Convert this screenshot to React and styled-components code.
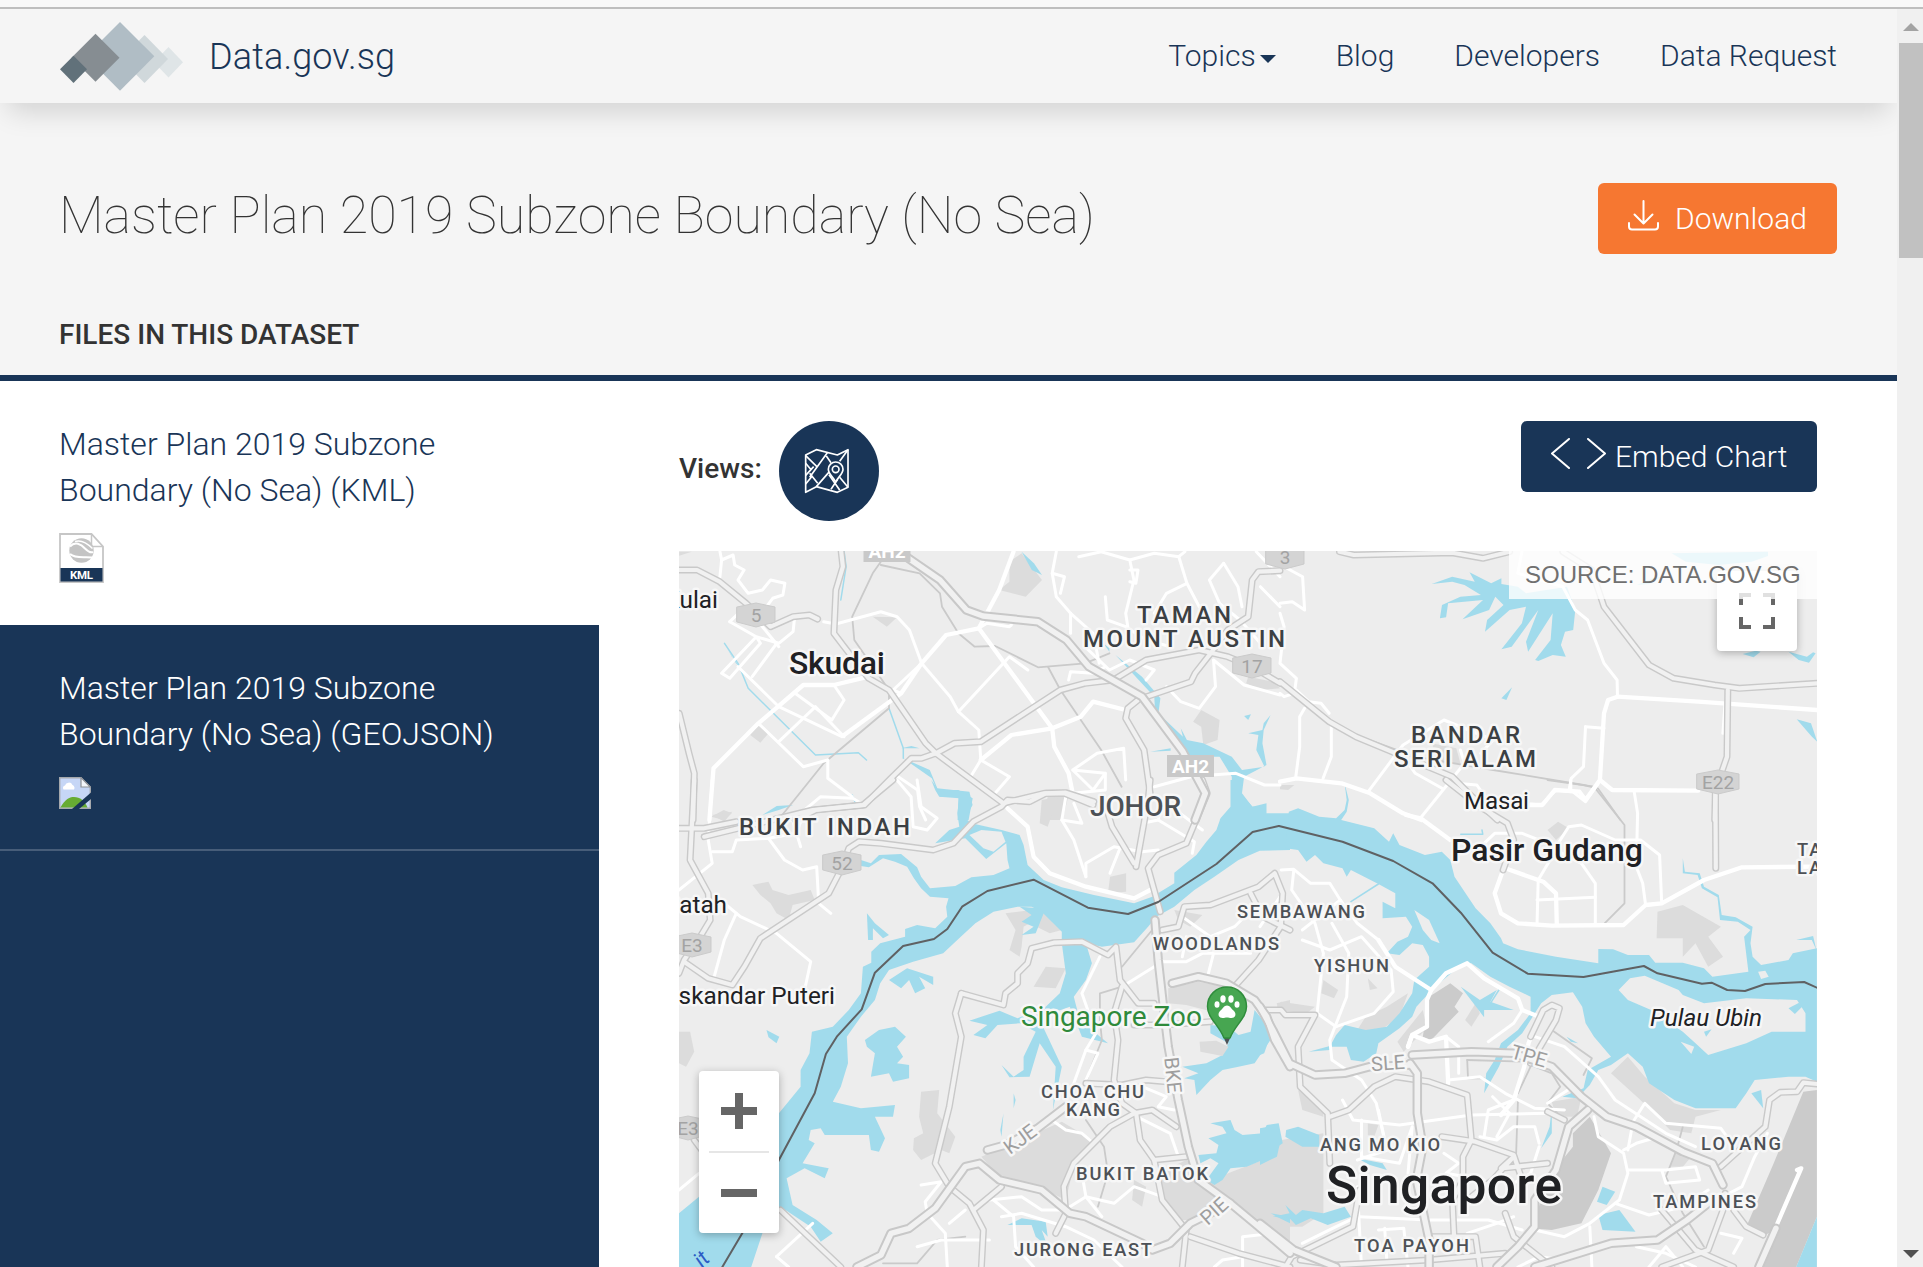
import React from 'react';
import styled, { createGlobalStyle } from 'styled-components';

const navy = '#193557';

const GlobalStyle = createGlobalStyle`
  * { box-sizing: border-box; }
  body {
    margin: 0;
    background: #fff;
    font-family: Roboto, 'Liberation Sans', sans-serif;
    overflow: hidden;
  }
`;

/* ---------- page frame ---------- */

const Window = styled.div`
  display: flex;
  flex-direction: column;
  width: 1923px;
  height: 1267px;
  overflow: hidden;
`;

const ToolbarEdge = styled.div`
  flex: none;
  height: 9px;
  background: #f8f8f8;
  border-bottom: 2px solid #bebebe;
`;

const Viewport = styled.div`
  display: flex;
  flex: 1;
  min-height: 0;
`;

const Page = styled.div`
  display: flex;
  flex-direction: column;
  width: 1897px;
  overflow: hidden;
`;

const ScrollTrack = styled.div`
  display: flex;
  flex-direction: column;
  align-items: center;
  width: 26px;
  padding: 14px 0 9px 2px;
  background: #f0f0f0;
`;

const ScrollArrow = styled.svg`
  flex: none;
  display: block;
  width: 16px;
  height: 8px;
`;

const ScrollThumb = styled.div`
  flex: none;
  width: 24px;
  height: 215px;
  margin: 12px 0 auto;
  background: #c1c1c1;
`;

/* ---------- header ---------- */

const Header = styled.header`
  position: relative;
  z-index: 1;
  flex: none;
  display: flex;
  align-items: center;
  height: 94px;
  padding: 0 60px;
  background: #f5f5f5;
  box-shadow: 0 16px 28px -8px rgba(0, 0, 0, 0.15);
`;

const LogoMark = styled.svg`
  flex: none;
  width: 123px;
  height: 69px;
`;

const Brand = styled.a`
  margin: 2px 0 0 26px;
  font-size: 36px;
  font-weight: 300;
  line-height: 42px;
  letter-spacing: 0.15px;
  color: ${navy};
`;

const Nav = styled.nav`
  display: flex;
  gap: 60px;
  margin-left: auto;
`;

const NavLink = styled.a`
  display: flex;
  align-items: center;
  font-size: 30px;
  font-weight: 300;
  line-height: 36px;
  color: ${navy};
`;

const Caret = styled.span`
  width: 0;
  height: 0;
  margin: 5px 0 0 4px;
  border: 8px solid transparent;
  border-top-color: ${navy};
  border-bottom: 0;
`;

/* ---------- title area ---------- */

const Hero = styled.section`
  flex: none;
  display: flex;
  flex-direction: column;
  height: 278px;
  padding: 80px 60px 0 59px;
  background: #f5f5f5;
  border-bottom: 6px solid ${navy};
`;

const HeroRow = styled.div`
  display: flex;
  justify-content: space-between;
  align-items: flex-start;
`;

const Title = styled.h1`
  margin: 1px 0 0;
  font-size: 52px;
  font-weight: 100;
  line-height: 64px;
  color: #333;
`;

const Button = styled.button`
  display: flex;
  align-items: center;
  height: 71px;
  width: ${(p) => p.$width}px;
  padding: 0 0 0 30px;
  border: 0;
  border-radius: 6px;
  background: ${(p) => p.$fill};
  color: #fff;
  font-family: inherit;
  font-size: 30px;
  font-weight: 300;
  line-height: 36px;
  white-space: nowrap;
`;

const ButtonIcon = styled.svg`
  flex: none;
  width: ${(p) => p.$w}px;
  height: ${(p) => p.$h}px;
  margin: 0 ${(p) => p.$gap}px 7px 0;
  fill: none;
  stroke: #fff;
  stroke-width: 2;
  stroke-linecap: round;
  stroke-linejoin: round;
`;

const SectionLabel = styled.h2`
  margin: 65px 0 0;
  font-size: 28px;
  font-weight: 500;
  line-height: 32px;
  color: #333;
`;

/* ---------- body ---------- */

const Body = styled.main`
  flex: 1;
  display: flex;
  min-height: 0;
`;

const FileList = styled.aside`
  width: 599px;
  display: flex;
  flex-direction: column;
  background: ${navy};
`;

const FileItem = styled.a`
  display: flex;
  flex-direction: column;
  align-items: flex-start;
  height: ${(p) => (p.$active ? 226 : 244)}px;
  padding: 40px 60px 0 59px;
  background: ${(p) => (p.$active ? navy : '#fff')};
  color: ${(p) => (p.$active ? '#fff' : navy)};
  border-bottom: ${(p) => (p.$active ? '2px solid #475d79' : '0')};
`;

const FileName = styled.span`
  font-size: 32px;
  font-weight: 300;
  line-height: 46px;
  white-space: pre-line;
`;

const FileBadge = styled.svg`
  margin-top: 20px;
  flex: none;
  display: block;
  width: ${(p) => p.$w}px;
  height: ${(p) => p.$h}px;
`;

const Viewer = styled.section`
  display: flex;
  flex-direction: column;
  padding: 40px 80px 0;
`;

const ViewerBar = styled.div`
  display: flex;
  align-items: flex-start;
  height: 130px;
`;

const ViewsLabel = styled.span`
  width: 100px;
  margin-top: 32px;
  font-size: 28px;
  font-weight: 500;
  line-height: 32px;
  color: #333;
`;

const ViewToggle = styled.button`
  display: flex;
  align-items: center;
  justify-content: center;
  width: 100px;
  height: 100px;
  margin-right: auto;
  padding: 0 4px 0 0;
  border: 0;
  border-radius: 50%;
  background: ${navy};

  svg {
    width: 46px;
    height: 46px;
    fill: none;
    stroke: #fff;
    stroke-width: 5;
    stroke-linejoin: round;
  }
`;

/* ---------- map ---------- */

const MapFrame = styled.div`
  position: relative;
  width: 1138px;
  height: 716px;
  overflow: hidden;
  background: #ededed;
`;

const MapCanvas = styled.svg`
  display: block;
  width: 1138px;
  height: 716px;
  fill: none;
  stroke-linejoin: round;
  stroke-linecap: round;
`;

const MapLabel = styled.text`
  font-family: Roboto, 'Liberation Sans', sans-serif;
  font-size: ${(p) => p.$size}px;
  font-weight: ${(p) => p.$weight || 400};
  font-style: ${(p) => (p.$italic ? 'italic' : 'normal')};
  letter-spacing: ${(p) => p.$track || 0}px;
  fill: ${(p) => p.$ink || '#202124'};
  stroke: ${(p) => p.$halo || '#f7f7f7'};
  stroke-width: 5px;
  paint-order: stroke;
  text-anchor: ${(p) => p.$anchor || 'start'};
`;

const ShieldText = styled.text`
  font-family: Roboto, 'Liberation Sans', sans-serif;
  font-size: 19px;
  font-weight: ${(p) => (p.$strong ? 700 : 400)};
  fill: ${(p) => (p.$strong ? '#fff' : '#a3a3a3')};
  text-anchor: middle;
`;

const SourceTag = styled.div`
  position: absolute;
  top: 0;
  right: 0;
  width: 308px;
  height: 48px;
  padding: 0 16px;
  background: rgba(255, 255, 255, 0.8);
  font-family: 'Liberation Sans', Arial, sans-serif;
  font-size: 24px;
  line-height: 47px;
  color: #707070;
  white-space: nowrap;
`;

const MapControl = styled.div`
  position: absolute;
  left: ${(p) => p.$x}px;
  top: ${(p) => p.$y}px;
  display: flex;
  flex-direction: column;
  align-items: center;
  width: 80px;
  border-radius: 4px;
  background: #fff;
  box-shadow: 0 2px 8px rgba(0, 0, 0, 0.28);
`;

const ControlIcon = styled.svg`
  display: block;
  width: 80px;
  height: 80px;
  fill: #666;
`;

const ControlRule = styled.div`
  width: 60px;
  height: 2px;
  background: #e6e6e6;
`;

/* ---------- map geometry ---------- */

const sheets = {
  nw: { x: -39, y: -171, w: 2.45 },
  ne: { x: 601, y: -171, w: 2.4386 },
  sw: { x: -19, y: 229, w: 2.489 },
  se: { x: 581, y: 229, w: 2.365 },
};

const project = (sheet, points) => {
  const s = sheets[sheet];
  return points
    .trim()
    .split(/\s+/)
    .map((pair) => {
      const [x, y] = pair.split(',').map(Number);
      return `${(s.x + x / s.w).toFixed(1)},${(s.y + y / 3).toFixed(1)}`;
    })
    .join(' ');
};

const parks = [
  ['nw', '905,545 935,520 985,600 945,650 880,630 905,605'],
  ['nw', '570,710 630,712 605,740'],
  ['nw', '270,1065 290,1035 315,1060 295,1088'],
  ['nw', '1375,990 1420,1020 1415,1080 1380,1095 1375,1040 1355,1025'],
  ['nw', '1490,890 1550,905 1568,925 1520,930 1485,910'],
  ['nw', '985,1320 1000,1245 1050,1245 1035,1320'],
  ['nw', '96,515 127,515 96,527'],
  ['nw', '175,1310 205,1290 225,1300 205,1320'],
  ['ne', '370,1090 430,1105 440,1150 390,1150'],
  ['ne', '0,1215 35,1215 20,1230 0,1228'],
  ['sw', '230,315 270,305 280,330 320,345 375,330 385,360 330,375 320,420 290,400 275,370 250,345'],
  ['sw', '130,105 180,95 160,125'],
  ['sw', '47,755 75,755 85,815 65,860 47,850'],
  ['sw', '650,935 695,930 690,1000 735,1070 720,1120 700,1110 650,1140 630,1110 632,1075 655,1060 645,1010'],
  ['sw', '800,1130 1000,1025 1085,1085 1060,1110 1030,1160 1010,1260 950,1225 850,1200'],
  ['sw', '860,400 960,385 1000,450 970,460 920,430 905,440 900,500 895,530 870,510 885,450'],
  ['sw', '960,560 1010,565 985,625 930,620'],
  ['sw', '1265,625 1340,605 1420,625 1460,680 1390,700 1310,675 1265,670'],
  ['sw', '1240,1180 1310,1140 1370,1200 1500,1140 1568,1130 1568,1390 1500,1350 1420,1270 1340,1320 1280,1320 1240,1230'],
  ['sw', '950,60 990,50 965,140 945,130'],
  ['sw', '1120,290 1160,280 1160,335 1115,340'],
  ['sw', '1280,390 1350,405 1320,440 1290,420'],
  ['sw', '1180,1200 1210,1220 1200,1280 1175,1260'],
  ['sw', '1535,670 1568,660 1568,690 1540,695'],
  ['se', '0,1160 50,1080 150,1060 150,1300 100,1340 60,1340 0,1300'],
  ['se', '940,395 1000,375 1090,440 1060,470 1095,530 1060,560 1030,490 1000,530 1000,475 938,475'],
  ['se', '250,710 300,680 350,640 330,710 280,755 230,750'],
  ['se', '325,785 385,690 395,745 350,800 340,815'],
  ['se', '770,675 875,795 865,805 800,760 770,720'],
  ['se', '830,880 870,830 910,890 980,970 1030,990 1090,990 1030,1010 1020,1060 970,1050 900,960'],
  ['se', '690,965 760,950 750,1010 700,1010'],
  ['se', '680,150 705,125 730,145 700,180'],
  ['se', '150,600 185,630 175,655 145,640'],
  ['se', '255,595 278,625 260,630'],
  ['se', '35,690 50,665 130,680 110,700'],
  ['se', '90,930 150,980 150,1010 100,990'],
  ['se', '485,720 510,670 520,700 500,740'],
  ['se', '255,1030 280,1035 270,1070 255,1065'],
  ['se', '980,1120 1020,1130 1000,1160 970,1160'],
];

const runways = [
  ['se', '400,650 450,610 480,640 460,680 470,695 405,780 385,770'],
  ['se', '740,1060 780,1010 830,1120 800,1230 760,1330 690,1350 640,1345 690,1180 740,1100'],
  ['se', '1285,935 1317,930 1317,1310 1268,1461 1180,1461 1220,1345 1190,1370 1150,1340 1215,1150'],
];

const water = [
  // Johor Strait, west half
  ['sw', `47,1461 47,1300 97,1250 200,1150 296,1000 350,920 350,870 372,820 378,755 430,740 470,690 500,640 505,560 526,548
    526,515 548,490 610,470 610,447 640,435 685,445 715,410 712,380 718,355 672,350 650,325 632,295 615,260 585,245 555,235
    520,262 500,258 500,240 525,250 545,225 600,222 640,262 650,290 672,325 735,318 775,292 830,285 870,265 865,240 862,190
    812,237 760,175 685,190 720,150 745,140 740,100 745,55 695,50 685,30 675,0 690,25 770,35 778,75 760,115 775,130 850,150 895,165
    905,195 915,255 955,300 1000,322 1080,345 1180,370 1225,350 1280,310 1280,278 1335,225 1360,185 1385,150 1395,115 1420,80
    1420,0 1450,0 1445,40 1475,80 1505,78 1508,100 1568,100 1568,210 1493,212 1440,240 1380,290 1330,330 1280,380 1235,410
    1215,440 1180,487 1100,500 1060,490 1075,550 1060,600 1030,650 1045,720 1115,790 1050,770 1020,680 975,700 955,745 1000,860
    978,990 985,860 945,790 920,890 870,892 850,855 880,890 905,870 905,830 935,755 895,730 840,735 810,775 780,765 815,735
    770,722 845,692 890,715 920,700 960,680 995,640 1010,580 1000,490 1000,455 950,395 925,380 890,380 830,395 785,430 740,480 705,520
    630,545 570,570 548,610 535,660 500,710 465,770 468,850 450,920 430,965 500,985 585,975 580,1010 535,1010 560,1075 545,1115
    525,1110 520,1065 410,1065 400,1045 375,1050 370,1080 385,1090 355,1150 400,1160 420,1165 410,1195 360,1165 315,1195
    330,1275 390,1320 430,1360 400,1385 375,1340 300,1280 255,1359 227,1461`],
  // east half and Serangoon Harbour
  ['se', `68,95 90,85 140,110 180,115 200,90 205,60 200,10 210,60 205,95 192,120 270,145 305,185 315,160 330,195 390,225
    430,215 450,240 460,290 510,385 545,430 570,475 575,490 610,508 700,530 800,550 800,507 835,508 870,525 920,525 935,548
    1000,548 1050,565 1070,590 1155,575 1145,470 1160,450 1130,425 1088,420 1082,352 1045,325 1035,285 1000,280 1000,235
    1005,275 1040,280 1050,320 1085,345 1092,405 1125,412 1165,440 1160,490 1165,530 1185,555 1250,540 1260,520 1317,505
    1317,905 1290,890 1250,890 1170,900 1150,940 1125,985 1030,985 980,960 920,910 905,860 870,820 830,855 800,870 780,915
    750,955 715,950 765,925 775,870 830,830 790,770 770,730 762,680 740,637 690,645 665,670 650,700 620,760 585,800 565,860 530,940
    535,880 555,840 570,790 610,750 640,700 640,650 590,620 545,590 500,550 480,550 410,625 370,680 360,710 330,745 280,790 275,820 245,845 215,840
    205,800 165,800 180,765 200,735 250,750 300,740 330,700 360,640 365,600 400,560 400,530 385,495 360,490 330,525 300,520
    325,485 350,470 360,440 345,410 290,415 290,365 320,385 320,340 280,312 215,270 205,290 195,265 150,250 130,225 110,245
    90,210 60,205`],
  ['sw', '510,780 545,750 585,740 612,770 590,800 605,830 590,850 620,855 620,895 580,905 570,880 525,890 535,820 515,800'],
  ['sw', '570,600 615,565 680,590 680,615 645,590 660,625 635,640 620,600 600,625'],
  ['sw', '515,400 535,430 570,465 555,475 530,445 530,480 518,480'],
  ['sw', '265,750 297,770 290,790 270,772'],
  ['sw', '880,940 885,960 880,985'],
  ['sw', '855,1000 850,1070 847,1050'],
  ['sw', '895,380 945,385 955,400 935,460 900,465 930,440 900,425 925,405'],
  ['sw', '1370,735 1415,740 1440,765 1470,755 1480,690 1500,720 1525,770 1480,850 1440,860 1400,870 1370,900 1335,945 1330,900 1305,895 1340,880 1300,860 1360,850 1400,825 1415,790 1370,760'],
  ['sw', '1340,1125 1385,1120 1390,1095 1365,1075 1410,1060 1400,1040 1370,1030 1420,1020 1430,1050 1450,1065 1500,1060 1510,1035 1540,1030 1550,1090 1525,1110 1500,1140 1460,1160 1420,1165 1400,1200 1380,1215 1360,1200 1390,1150 1370,1135 1345,1150'],
  ['sw', '865,1335 900,1315 960,1325 965,1370 950,1350 965,1400 935,1370 925,1335'],
  ['sw', '1520,1300 1568,1310 1568,1330 1535,1310'],
  ['se', '0,1045 40,1035 50,1075 40,1130 0,1155'],
  ['se', '62,1050 90,1040 140,1065 140,1100 100,1100 60,1070'],
  ['se', '30,1310 70,1300 60,1275 85,1305 100,1290 150,1300 200,1280 215,1310 160,1335 120,1315 85,1335 70,1315'],
  ['se', '810,1220 840,1235 820,1275 797,1265'],
  ['se', '800,1305 850,1290 888,1355 810,1350'],
  ['se', '0,740 25,765 10,820 0,825'],
  ['se', '475,620 520,660 560,630 545,665 600,690 530,690 530,712'],
  ['se', '690,985 690,1060 665,1105 685,1040'],
  ['se', '725,770 752,790 735,785'],
  ['se', '115,815 165,798 165,810'],
  ['se', '230,1135 290,1150 300,1170 260,1155'],
  ['se', '1317,1310 1317,1461 1268,1461'],
  ['se', '1162,940 1185,930 1190,985'],
  ['se', '1268,480 1308,468 1316,510 1305,480'],
  ['ne', `370,612 420,590 475,605 462,577 515,610 540,595 540,612 580,620 600,640 700,620 720,690 715,750 695,755 685,795
    697,830 665,825 630,843 622,840 660,780 665,700 605,815 600,785 630,690 565,800 540,808 590,730 600,680 560,690 500,755
    505,720 545,675 525,650 510,690 445,718 495,660 410,670 405,712 390,715 395,675 440,650 490,645 450,615 420,605`],
  ['ne', '955,520 1190,515 1190,528 1150,545 1070,555 990,545'],
  ['ne', '870,615 910,595 930,590 900,612'],
  ['ne', '540,955 566,922 552,960'],
  ['ne', '1128,822 1160,812 1172,815 1155,832'],
  ['ne', '1240,815 1285,830 1300,817 1306,820 1290,848 1265,840'],
  ['ne', '1260,1018 1295,1030 1310,1085 1297,1070'],
  ['nw', '935,515 965,550 985,585 960,570'],
  ['nw', `1165,825 1230,890 1275,955 1270,1000 1330,1070 1325,1045 1340,1080 1380,1090 1450,1130 1475,1170 1530,1160 1510,1110
    1515,1065 1490,1060 1525,1050 1528,1030 1545,1005 1528,1050 1525,1090 1535,1155 1480,1190 1475,1240 1500,1280 1535,1270 1535,1320
    1420,1320 1450,1290 1450,1190 1420,1130 1350,1130 1290,1065 1262,1000 1260,950`],
  ['nw', '645,1135 710,1170 730,1230 780,1230 815,1255 805,1320 778,1320 780,1250 735,1250 715,1195'],
  ['nw', '207,790 225,830 245,860 235,850'],
  ['nw', '300,1305 335,1278 375,1275 340,1290'],
  ['nw', '1480,1008 1497,1003 1490,1020'],
  ['nw', '640,1105 665,1098 685,1105'],
  ['nw', '1250,1115 1300,1105 1300,1112'],
  ['nw', '1135,790 1150,805 1150,815'],
];

const streams = [
  ['nw', '207,790 240,850 265,925 430,1125 535,1118 555,1140'],
  ['nw', '610,985 645,1105 645,1135'],
  ['nw', '500,515 505,560 492,660'],
  ['nw', '520,1245 530,1275'],
  ['se', '475,163 527,163 525,150'],
  ['se', '215,365 280,312'],
  ['se', '565,630 545,670'],
];

const islands = [
  ['se', '848,630 875,595 910,587 990,630 1000,645 1050,670 1150,655 1270,660 1290,700 1290,755 1210,755 1150,790 1060,825 1030,790 1000,755 925,690 870,660'],
  ['se', '1178,575 1195,572 1203,590 1185,597'],
  ['se', '365,390 400,420 425,490 405,480 385,450'],
  ['se', '995,785 1027,800 1020,822'],
  ['sw', '770,165 800,150 850,155 860,185 830,215 805,205'],
];

const headlands = [['sw', '1343,785 1385,782 1415,800 1400,828 1345,815']];

const ponds = [
  ['se', '1250,685 1275,668 1282,680 1265,702'],
  ['se', '1050,755 1068,748 1055,770'],
];

const rails = [
  ['nw', '590,555 685,580 735,640 740,680 780,760 820,800 870,798 975,862 1090,850 1150,820'],
  ['nw', '590,545 570,580 520,710 525,780 610,930 610,985 450,1150 345,1310'],
  ['nw', '1000,862 1030,930 1080,1020 1130,1110 1180,1220'],
  ['ne', '185,1065 330,1130 520,1170 740,1215 775,1225 830,1320'],
  ['sw', '1150,560 1225,450'],
  ['sw', '1150,620 1095,640 1095,720 1100,780 1070,870 1060,910'],
  ['sw', '1060,1020 1105,1100 1115,1180 1090,1280'],
  ['sw', '555,1450 640,1450 690,1380 760,1370'],
  ['se', '680,0 790,20 862,135 862,370 815,430'],
  ['se', '490,840 620,845 690,880 710,920 680,970 720,1020'],
  ['se', '490,840 492,895 530,895'],
  ['se', '690,750 785,835 765,885'],
  ['se', '610,965 605,1150'],
  ['se', '610,940 640,860'],
  ['se', '1000,1040 985,1110 960,1190 1000,1300 1050,1400'],
];

const streets = [
  ['nw', '196,515 200,540 228,525 232,555 255,570 240,600 265,640 300,630 320,600 355,610 350,645 325,655 310,680'],
  ['nw', '200,540 195,600'],
  ['nw', '450,725 480,732 590,695 630,710 660,750 690,850'],
  ['nw', '690,850 760,950 780,995 830,1050 835,1140 905,1190 870,1240'],
  ['nw', '780,995 905,830 950,870'],
  ['nw', '220,725 285,770 200,880 220,895 295,790 285,770 340,790 375,755 378,720'],
  ['nw', '220,725 250,690 300,740 340,800'],
  ['nw', '335,790 275,890'],
  ['nw', '240,860 340,980 495,1070'],
  ['nw', '290,1030 400,1160 460,1140'],
  ['nw', '340,1085 430,980 500,1070'],
  ['nw', '380,940 470,1020 500,960 475,915'],
  ['nw', '690,850 620,930 640,940'],
  ['nw', '460,1140 460,1195 520,1250'],
  ['nw', '620,1180 680,1230 685,1280 700,1320'],
  ['nw', '1020,515 1010,580 1020,650 1055,700 1110,760 1125,850'],
  ['nw', '1010,580 1040,590 1030,640'],
  ['nw', '1055,700 1055,760'],
  ['nw', '1075,530 1130,515 1200,540 1210,600 1190,700 1195,740'],
  ['nw', '1200,570 1220,570 1215,610 1200,605'],
  ['nw', '1200,540 1260,520 1320,530 1340,610 1290,640 1260,700'],
  ['nw', '1320,530 1335,515'],
  ['nw', '1340,610 1370,680'],
  ['nw', '1430,550 1395,600 1420,670 1470,720 1520,790'],
  ['nw', '1430,550 1465,620 1475,680'],
  ['nw', '1510,515 1568,590'],
  ['nw', '1520,620 1568,680'],
  ['nw', '1050,900 1055,875 1110,880 1140,860'],
  ['nw', '1140,650 1145,720 1190,740 1240,780 1300,800'],
  ['nw', '1090,800 1150,870 1200,840 1260,870 1240,900'],
  ['nw', '1290,920 1325,965 1370,985 1410,920 1405,840 1480,915 1568,945'],
  ['nw', '1060,1170 1140,1180 1110,1230 1060,1170 1120,1120 1185,1105 1190,1200'],
  ['nw', '1060,1240 1140,1230 1140,1180'],
  ['nw', '830,745 850,730 905,740 910,735'],
  ['nw', '1400,1185 1460,1180 1530,1215 1568,1215'],
  ['nw', '1260,1220 1350,1190 1400,1185'],
  ['nw', '835,1140 810,1190'],
  ['ne', '590,515 580,580 690,620 720,690 750,720 790,850 822,900 823,950'],
  ['ne', '745,1040 790,1045'],
  ['ne', '745,1040 740,1160 710,1195 705,1230'],
  ['ne', '1085,975 1080,1060'],
  ['ne', '60,985 48,1010 48,1100 38,1195'],
  ['ne', '125,1040 125,1130 105,1195'],
  ['ne', '215,1235 300,1095 400,1020 520,1080 490,1120'],
  ['ne', '345,1310 450,1150 440,1110'],
  ['ne', '290,1110 330,1180 395,1225'],
  ['ne', '10,560 55,590 60,690 30,665 0,670'],
  ['ne', '0,700 10,740 0,850 40,895 35,940 10,950 0,940'],
  ['ne', '40,930 70,965 100,970 120,1000'],
  ['ne', '430,1210 480,1215 500,1250'],
  ['sw', '130,0 120,180 130,250 47,330'],
  ['sw', '130,215 180,215 190,180 270,175 310,240 355,270 390,260 395,370 425,400'],
  ['sw', '270,175 340,160 360,90 400,50 480,55 500,70'],
  ['sw', '290,120 330,120 350,200'],
  ['sw', '590,0 625,50 630,140 665,150 690,115 650,80 640,0'],
  ['sw', '190,400 160,480 135,590'],
  ['sw', '150,360 200,410 290,460 375,545 360,630'],
  ['sw', '1010,50 1000,120 1030,180 1060,290'],
  ['sw', '1000,120 1050,130 1030,70'],
  ['sw', '1060,290 1060,250 1130,200 1200,215 1240,210'],
  ['sw', '1150,190 1120,280'],
  ['sw', '1200,130 1240,120 1250,60 1350,150'],
  ['sw', '1240,120 1330,185 1325,220'],
  ['sw', '1300,410 1370,470 1430,440 1480,380'],
  ['sw', '1250,545 1310,545 1350,520 1470,520'],
  ['sw', '1380,510 1365,580'],
  ['sw', '1310,470 1300,530'],
  ['sw', '1095,530 1050,640 1085,760 1060,810 1030,910'],
  ['sw', '1060,810 1090,820 1060,900'],
  ['sw', '1150,620 1230,560'],
  ['sw', '1150,960 1200,920 1260,950 1240,980 1280,990'],
  ['sw', '975,1020 1010,1050 1050,1060 1080,1090'],
  ['sw', '1170,1000 1270,1060 1290,1130'],
  ['sw', '650,1215 700,1205 660,1265 665,1300 710,1360 715,1461'],
  ['sw', '47,1230 97,1180'],
  ['sw', '290,1430 380,1330'],
  ['sw', '290,1430 320,1461'],
  ['sw', '820,1260 900,1250 950,1290 1000,1290'],
  ['sw', '850,1310 900,1300 1010,1340 1080,1380 1150,1461'],
  ['sw', '640,1400 700,1380 820,1380'],
  ['sw', '720,1330 760,1290'],
  ['sw', '830,1260 880,1310 885,1400 930,1461'],
  ['sw', '1020,1280 1060,1250 1130,1270 1180,1220 1250,1250'],
  ['sw', '1050,1180 1060,1250 1100,1310'],
  ['sw', '1450,1461 1450,1370 1530,1360'],
  ['sw', '1380,1461 1400,1440 1450,1430'],
  ['se', '885,35 893,100 890,260 905,310 912,375'],
  ['se', '800,10 770,65 740,35 700,30 665,75 640,72'],
  ['se', '735,0 735,35'],
  ['se', '530,190 555,160 620,160 700,200 730,140 760,135 840,180 900,180 945,225 950,370'],
  ['se', '655,435 658,300 700,210 760,250 793,310 793,435'],
  ['se', '655,360 793,352'],
  ['se', '50,270 80,268 120,310 165,310 190,360 230,430 280,480'],
  ['se', '80,270 75,330 130,430 150,520 135,700 180,740'],
  ['se', '100,450 190,360'],
  ['se', '0,440 50,345'],
  ['se', '170,430 210,520 205,650 165,780 170,840 240,900 275,970 300,1110'],
  ['se', '100,480 165,510 240,470 310,570 315,635 270,700 180,740'],
  ['se', '540,785 600,730 620,690'],
  ['se', '650,770 720,800 800,890 840,960 960,1060 1030,1100'],
  ['se', '445,900 520,890 580,940 650,985 720,990'],
  ['se', '440,770 470,800 470,880'],
  ['se', '195,960 220,1020 330,1035 500,1005 680,1000'],
  ['se', '240,1020 240,1130 330,1150 360,1040 350,1180'],
  ['se', '280,990 300,1110 230,1140'],
  ['se', '550,950 590,1000 560,1070'],
  ['se', '520,1070 560,1080 600,1040 650,1040 660,1090'],
  ['se', '600,960 540,990 530,1070'],
  ['se', '740,920 680,970'],
  ['se', '660,1100 640,1180 600,1210'],
  ['se', '790,1010 800,1070 860,1120 870,1180 850,1260 780,1330 720,1370 650,1350'],
  ['se', '860,1110 890,1090 930,1075'],
  ['se', '880,1040 870,1110'],
  ['se', '870,1170 960,1170 1030,1160 1040,1200 960,1210 950,1170'],
  ['se', '840,1270 920,1305 1000,1280 1060,1230'],
  ['se', '880,1030 910,970 960,1030 1090,1045 1110,1080'],
  ['se', '230,1220 235,1340 240,1461'],
  ['se', '235,1310 400,1320 540,1320 620,1350'],
  ['se', '100,1390 180,1340 230,1310'],
  ['se', '280,1350 340,1345 350,1461'],
  ['se', '295,1345 300,1440'],
  ['se', '435,1120 470,1150 440,1180 530,1200'],
  ['se', '490,1360 560,1330 600,1310'],
  ['se', '780,1340 785,1461'],
  ['se', '610,1461 660,1430 720,1440'],
  ['se', '1200,1060 1170,1130 1140,1220 1110,1240'],
  ['se', '920,1461 960,1400 1000,1461'],
  ['se', '890,1400 960,1420 1030,1461'],
  ['se', '1090,1360 1140,1375 1120,1420'],
];

const avenues = [
  ['nw', '915,515 880,630 830,745 750,765 690,850 640,940 500,1065'],
  ['nw', '830,745 905,870 1010,1045 1015,1100 1050,1180 1060,1240'],
  ['nw', '835,1140 885,1090 910,1065 1010,1045 1080,1010 1110,965 1190,990'],
  ['nw', '170,1320 180,1165 290,1030 400,915 475,915 560,890'],
  ['ne', '823,950 1020,965 1310,990'],
  ['ne', '823,950 800,960 790,1000 780,1200 745,1260 730,1235 670,1230 640,1275 610,1275'],
  ['ne', '780,1200 810,1230 1020,1232'],
  ['ne', '0,1205 40,1195 150,1210 220,1240 300,1300 345,1320'],
  ['sw', '865,85 915,140 930,230 970,280 1060,320 1180,355 1220,330'],
  ['se', '345,105 380,115 450,180'],
  ['se', '575,270 555,340 570,400 610,430 690,437 860,435 912,375 950,370 1050,300 1140,262 1317,260'],
  ['se', '580,265 670,305 700,340 702,435'],
  ['se', '280,480 320,560 405,630'],
  ['se', '350,800 360,765 400,785 440,770 445,910'],
  ['se', '350,800 360,765 395,740 395,660 405,630 440,580 490,550 530,595 610,655 620,690 660,710 635,790 625,860 600,960 570,1005'],
  ['se', '1222,1335 1280,1165 1270,1170'],
];

const roads = [
  ['nw', '96,570 140,570 195,605 260,670 320,740 375,710 415,705 435,717'],
  ['nw', '493,515 497,560 480,630 475,760 500,800 560,895 610,930 700,1090 725,1120 890,1270'],
  ['nw', '725,1120 690,1135 665,1135 615,1195 550,1275 430,1290 380,1320'],
  ['nw', '725,1120 770,1090 835,1085 1030,930 1090,910 1160,900 1240,840 1370,810 1440,830 1500,860 1568,910'],
  ['nw', '1230,955 1350,905 1360,880 1395,825 1440,750 1490,710 1500,600 1515,575 1568,572'],
  ['nw', '1220,960 1195,985 1190,1015 1235,1110 1250,1240'],
  ['nw', '96,1000 120,1120 133,1180 130,1320'],
  ['nw', '890,1270 990,1240 1040,1240 1110,1275'],
  ['ne', '0,905 120,1025 185,1070 420,1190 460,1240 530,1320'],
  ['ne', '690,515 760,570 790,680 900,855 960,895 1060,915 1120,925 1310,910'],
  ['ne', '1092,930 1090,1130 1062,1230 1060,1320'],
  ['ne', '145,515 180,525 420,518 495,535 560,515'],
  ['sw', '85,0 75,240 120,340 125,420 100,470 60,540 47,580'],
  ['sw', '60,545 120,595 180,615 210,560 250,475 420,340 450,270 470,205 495,185 550,190 680,210 730,190 780,125 850,80 865,60 920,65 960,40 1010,38 1080,65'],
  ['sw', '580,0 505,75 380,90 110,170'],
  ['sw', '47,145 110,145 190,125'],
  ['sw', '1350,0 1362,40 1310,190 1240,225 1215,265 1245,395'],
  ['sw', '1220,0 1215,60 1185,260'],
  ['sw', '1110,80 1125,140 1180,250'],
  ['sw', '1250,450 1290,440 1305,380 1370,375 1490,320 1530,280 1550,340 1545,440 1490,540 1430,620'],
  ['sw', '1470,340 1500,410 1568,450'],
  ['sw', '750,640 855,675 860,640 890,610 890,580 915,550 925,505 980,488 1050,485 1115,525 1135,500 1145,600 1190,670 1230,670'],
  ['sw', '750,640 735,700 750,770 720,980 685,1150 720,1220 770,1270 805,1350 800,1461'],
  ['sw', '1150,620 1130,700 1140,780 1130,900 1150,970 1185,1000 1195,1080 1230,1140 1250,1260 1310,1350 1300,1461'],
  ['sw', '1180,1000 1120,1040 1030,1150 1005,1220 1010,1300 985,1360'],
  ['sw', '1180,1000 1225,990 1285,1040'],
  ['sw', '1230,1140 1310,1130'],
  ['sw', '1060,910 1150,915 1210,900 1260,905'],
  ['sw', '1320,1370 1440,1420 1568,1461'],
  ['sw', '300,1290 370,1370 450,1461'],
  ['sw', '780,1290 850,1220'],
  ['sw', '85,1080 110,1120'],
  ['sw', '1180,735 1250,735 1370,725'],
  ['se', '10,690 50,690 60,705 130,705 90,800 95,920 160,1000 165,1150'],
  ['se', '165,1010 210,990 270,920 320,890 400,905 490,945 500,1080 480,1130 480,1200 455,1260 460,1400'],
  ['se', '430,1070 510,1085 600,1125 620,1200'],
  ['se', '680,1150 570,1165 600,1130 550,1200 490,1260'],
  ['se', '640,770 670,690 690,675 708,685 700,720 640,850'],
  ['se', '680,995 720,1020'],
  ['se', '1090,1160 1195,1040 1205,960 1230,937 1270,935 1285,908 1317,912'],
  ['se', '1100,1240 1095,1290 1060,1410 950,1461'],
  ['se', '1120,1290 1150,1340 1190,1365'],
  ['se', '950,1290 1030,1410 1120,1461'],
  ['se', '580,1300 600,1370 690,1461'],
  ['se', '60,1461 75,1430 220,1340 235,1230'],
  ['se', '95,1440 180,1455 400,1440 580,1420'],
  ['se', '400,1370 510,1370 520,1461'],
  ['se', '440,0 520,80 585,130 600,180 575,270'],
  ['se', '1077,30 1078,265'],
];

const expressways = [
  ['nw', '640,520 735,600 800,690 840,708 975,725 1045,780 1100,860 1230,950 1330,1115 1385,1240 1360,1320'],
  ['sw', '1232,420 1240,540 1255,700 1265,800 1290,960 1315,1100 1340,1200 1420,1270 1480,1330 1568,1420'],
  ['sw', '1275,610 1340,590 1410,610 1480,660 1510,710 1530,780 1568,860'],
  ['sw', '815,1110 860,1095 940,1045 1010,980'],
  ['sw', '490,1461 550,1425 575,1360 620,1345 685,1285 760,1160 795,1150 845,1200 950,1230 1020,1300 1060,1310 1200,1390 1225,1410 1270,1390 1320,1330 1420,1270'],
  ['se', '0,680 30,750 70,850 130,885 200,880 260,860 355,855'],
  ['se', '360,825 500,815 600,820 690,860 760,950 820,1010 890,1040 1000,1115 1070,1150 1095,1215'],
  ['se', '355,850 372,880 372,1000 385,1100 370,1200 400,1380 400,1461'],
  ['se', '775,990 730,1040 700,1170 650,1260 650,1340 610,1400 560,1461'],
  ['se', '0,1330 80,1410 180,1461'],
  ['se', '650,1461 830,1390 940,1380 1010,1320 1060,1270'],
  ['se', '1180,1461 1220,1345'],
];

const border = [
  ['sw', '155,1461 205,1359 296,1140 385,940 413,822 440,770 502,688 535,578 605,498 682,477 715,447 752,380 815,333 930,299 1065,383 1165,402 1240,366 1385,252 1475,156 1540,138'],
  ['se', '45,138 195,185 315,243 408,310 475,398 550,518 633,581 765,591 908,558 940,580 1045,611 1068,608 1105,630 1147,633 1195,612 1287,606 1317,623'],
];

const town = { size: 24.3 };
const district = { size: 24, weight: 500, track: 2.5, ink: '#3c4043' };
const suburb = { size: 18.3, weight: 500, track: 2, ink: '#4d5156' };
const city = { size: 32, weight: 500 };
const expressway = { size: 20, ink: '#9e9e9e', anchor: 'middle' };

const labels = [
  { ...town, text: 'Kulai', x: 39, y: 57, anchor: 'end' },
  { ...city, text: 'Skudai', x: 110, y: 123, w: 96 },
  { ...district, text: 'TAMAN', x: 458, y: 72, w: 94 },
  { ...district, text: 'MOUNT AUSTIN', x: 404, y: 96, w: 202 },
  { size: 28, weight: 500, ink: '#4d5156', text: 'JOHOR', x: 411, y: 265, w: 91 },
  { ...district, text: 'BUKIT INDAH', x: 60, y: 284, w: 171 },
  { ...town, text: 'Gelang Patah', x: 48, y: 362, anchor: 'end' },
  { ...town, text: 'Iskandar Puteri', x: 156, y: 453, anchor: 'end' },
  { size: 28, ink: '#2f8a3b', text: 'Singapore Zoo', x: 342, y: 475, w: 181 },
  { ...suburb, text: 'WOODLANDS', x: 474, y: 399, w: 126 },
  { ...suburb, text: 'SEMBAWANG', x: 558, y: 367, w: 128 },
  { ...suburb, text: 'YISHUN', x: 635, y: 421, w: 75 },
  { ...suburb, text: 'CHOA CHU', x: 362, y: 547, w: 103 },
  { ...suburb, text: 'KANG', x: 387, y: 565, w: 54 },
  { ...suburb, text: 'BUKIT BATOK', x: 397, y: 629, w: 132 },
  { ...suburb, text: 'JURONG EAST', x: 335, y: 705, w: 138 },
  { ...suburb, text: 'ANG MO KIO', x: 641, y: 600, w: 120 },
  { size: 51.5, weight: 500, text: 'Singapore', x: 647, y: 652, w: 236 },
  { ...suburb, text: 'TOA PAYOH', x: 675, y: 701, w: 115 },
  { ...suburb, text: 'LOYANG', x: 1022, y: 599, w: 80 },
  { ...suburb, text: 'TAMPINES', x: 974, y: 657, w: 103 },
  { ...town, italic: true, text: 'Pulau Ubin', x: 971, y: 475, w: 112 },
  { ...suburb, text: 'TANJUNG', x: 1118, y: 305 },
  { ...suburb, text: 'LANGSAT', x: 1118, y: 323 },
  { ...town, text: 'Masai', x: 785, y: 258, w: 65 },
  { ...city, text: 'Pasir Gudang', x: 772, y: 310, w: 192 },
  { ...district, text: 'BANDAR', x: 732, y: 192, w: 109 },
  { ...district, text: 'SERI ALAM', x: 715, y: 216, w: 142 },
  { ...expressway, text: 'BKE', x: 494, y: 524, turn: 84, dy: 7 },
  { ...expressway, text: 'KJE', x: 341, y: 588, turn: -36, dy: 7 },
  { ...expressway, text: 'PIE', x: 535, y: 660, turn: -42, dy: 7 },
  { ...expressway, text: 'SLE', x: 709, y: 512, turn: -4, dy: 7 },
  { ...expressway, text: 'TPE', x: 850, y: 505, turn: 16, dy: 7 },
  { size: 22, italic: true, ink: '#2c5cc5', halo: '#a1dbec', text: 'it', x: 27, y: 704, turn: -45, anchor: 'end', dy: 7 },
];

const shields = [
  { text: '5', x: 77, y: 64, w: 38 },
  { text: '17', x: 573, y: 115, w: 38 },
  { text: '52', x: 163, y: 312, w: 38 },
  { text: 'E3', x: 13, y: 394, w: 38 },
  { text: 'E3', x: 9, y: 577, w: 38 },
  { text: 'E22', x: 1039, y: 231, w: 42 },
  { text: '3', x: 606, y: 6, w: 38 },
  { text: 'AH2', x: 208, y: 0, w: 47, plate: true },
  { text: 'AH2', x: 511.5, y: 215, w: 47, plate: true },
];

const lines = (list, stroke, width) =>
  list.map(([sheet, pts], i) => (
    <polyline key={i} points={project(sheet, pts)} stroke={stroke} strokeWidth={width} />
  ));

const areas = (list, fill) =>
  list.map(([sheet, pts], i) => <polygon key={i} points={project(sheet, pts)} fill={fill} />);

function Label({ text, x, y, w, turn, dy, size, weight, italic, track, ink, halo, anchor }) {
  return (
    <MapLabel
      x={turn ? 0 : x}
      y={turn ? dy : y}
      transform={turn ? `translate(${x} ${y}) rotate(${turn})` : undefined}
      textLength={w}
      $size={size}
      $weight={weight}
      $italic={italic}
      $track={w ? 0 : track}
      $ink={ink}
      $halo={halo}
      $anchor={anchor}
    >
      {text}
    </MapLabel>
  );
}

function Shield({ text, x, y, w, plate }) {
  const h = w / 2;
  return (
    <g transform={`translate(${x} ${y})`}>
      {plate ? (
        <rect x={-h} y={-11} width={w} height={22} fill="#c9c9c9" />
      ) : (
        <path
          d={`M${-h} -8 L0 -12 L${h} -8 V7 L0 12 L${-h} 7Z`}
          fill="#d4d4d4"
          stroke="#cbcbcb"
          strokeWidth="1"
        />
      )}
      <ShieldText y={6.5} $strong={plate}>
        {text}
      </ShieldText>
    </g>
  );
}

function ZooPin() {
  return (
    <g transform="translate(548 435)">
      <path d="M-4 50 L0 59 L4 50Z" fill="#4d5156" />
      <path
        d="M0 1 C-11 1 -19.5 9.5 -19.5 20.5 C-19.5 32 -8 39 -3 52 H3 C8 39 19.5 32 19.5 20.5 C19.5 9.5 11 1 0 1Z"
        fill="#47a651"
        stroke="#2f8d3c"
        strokeWidth="1.5"
      />
      <g fill="#fff">
        <ellipse cx="-10" cy="18.5" rx="2.5" ry="3.2" />
        <ellipse cx="-4" cy="13" rx="2.7" ry="3.7" />
        <ellipse cx="4" cy="13" rx="2.7" ry="3.7" />
        <ellipse cx="10" cy="18.5" rx="2.5" ry="3.2" />
        <path d="M0 19.5 C3 19.5 4 22.5 6.5 24.5 C10 27.5 8.5 32 4.5 32 C2.5 32 1.5 31.5 0 31.5 C-1.5 31.5 -2.5 32 -4.5 32 C-8.5 32 -10 27.5 -6.5 24.5 C-4 22.5 -3 19.5 0 19.5Z" />
      </g>
    </g>
  );
}

function Map() {
  return (
    <MapFrame>
      <MapCanvas viewBox="0 0 1138 716">
        {areas(parks, '#dcdcdc')}
        {areas(runways, '#cbcbcb')}
        {areas(water, '#a1dbec')}
        {areas(islands, '#ededed')}
        {areas(headlands, '#dcdcdc')}
        {areas(ponds, '#a1dbec')}
        {lines(streams, '#a1dbec', 1.5)}
        {lines(rails, '#cacaca', 1.8)}
        {lines(streets, '#ffffff', 3)}
        {lines(avenues, '#ffffff', 4.3)}
        {lines(roads, '#c9c9c9', 7)}
        {lines(roads, '#f1f1f1', 4.2)}
        {lines(expressways, '#c8c8c8', 9.5)}
        {lines(expressways, '#f1f1f1', 5.5)}
        {lines(border, '#5f6163', 2)}
        {shields.map((s, i) => (
          <Shield key={i} {...s} />
        ))}
        {labels.map((l, i) => (
          <Label key={i} {...l} />
        ))}
        <ZooPin />
      </MapCanvas>
      <MapControl $x={1038} $y={20}>
        <ControlIcon viewBox="0 0 80 80">
          <path d="M22 22h12v4h-8v8h-4zM46 22h12v12h-4v-8h-8zM22 46h4v8h8v4H22zM54 46h4v12H46v-4h8z" />
        </ControlIcon>
      </MapControl>
      <SourceTag>SOURCE: DATA.GOV.SG</SourceTag>
      <MapControl $x={20} $y={520}>
        <ControlIcon viewBox="0 0 80 80">
          <path d="M36 22h8v14h14v8H44v14h-8V44H22v-8h14z" />
        </ControlIcon>
        <ControlRule />
        <ControlIcon viewBox="0 0 80 80">
          <path d="M22 36h36v8H22z" />
        </ControlIcon>
      </MapControl>
    </MapFrame>
  );
}

/* ---------- icons ---------- */

function Logo() {
  return (
    <LogoMark viewBox="0 0 123 69">
      <path d="M108.5 25 123 40.3 108.5 55.5 94 40.3z" fill="#dfe5e7" />
      <path d="M84.5 13 108 37 84.5 61 61 37z" fill="#d0d8db" />
      <path d="M60 0 94.3 34.3 60 68.7 25.7 34.3z" fill="#b0bdc5" />
      <path d="M35.5 11.7 59.5 35.7 35.5 59.7 11.5 35.7z" fill="#868d92" />
      <path d="M13.5 33.7 27 47.3 13.5 61 0 47.3z" fill="#61717a" />
    </LogoMark>
  );
}

const KmlText = styled.text`
  font-family: Roboto, 'Liberation Sans', sans-serif;
  font-size: 11.5px;
  font-weight: 700;
  fill: #fff;
  text-anchor: middle;
`;

function KmlIcon() {
  return (
    <FileBadge $w={45} $h={50} viewBox="0 0 45 50">
      <path d="M1 49V1H32.5L44 13.5V49Z" fill="#fff" stroke="#c6c6c6" strokeWidth="1.8" />
      <path d="M32.5 1V13.5H44" fill="none" stroke="#c6c6c6" strokeWidth="1.5" />
      <circle cx="22.5" cy="17.5" r="12.2" fill="#c4c4c4" />
      <path d="M11 13.5C16 8 22 11 26 15.5C29 18.5 32 20 34 19" fill="none" stroke="#fff" strokeWidth="2" />
      <path d="M16 8.5C22 6.5 28 10 33.5 15.5" fill="none" stroke="#fff" strokeWidth="1.4" />
      <path d="M11 21C17 26 25 23.5 33 24.5" fill="none" stroke="#fff" strokeWidth="2.2" />
      <rect x="1.5" y="35" width="42" height="13.5" fill={navy} />
      <KmlText x="22.5" y="46" textLength="23">KML</KmlText>
    </FileBadge>
  );
}

function BrokenImageIcon() {
  return (
    <FileBadge $w={32} $h={32} viewBox="0 0 32 32">
      <path d="M0.7 0.7H22L31.3 10V31.3H0.7Z" fill="#c6d6f6" stroke="#a5a8ac" strokeWidth="1.4" />
      <path d="M4.5 12.5a2.5 2.5 0 0 1 1.5-4 4 4 0 0 1 7.5-.5 3 3 0 0 1 1.5 4.5z" fill="#fff" />
      <path d="M1.4 30.6C6 22.5 10 20 15 20C21 20 26 24 28.5 30.6Z" fill="#67ac33" />
      <path d="M22 0.7V10H31.3Z" fill="#f4f6fb" stroke="#8e9196" strokeWidth="1.2" />
      <path d="M13 32 32 15.5V22L20 32Z" fill={navy} />
    </FileBadge>
  );
}

function MapIcon() {
  return (
    <svg viewBox="5 4 138 138">
      <path d="M10 137V25L42 9L105 25L137 9V122L105 137L42 120Z" />
      <path d="M75 18L22 92M10 27L46 62M10 50L25 68M34 60L10 86M22 80L46 110M10 112L28 90M42 120L82 74M72 28L86 48M137 9L112 44M112 92L137 122M80 84L112 130M106 98L86 128" />
      <path d="M100 106C92 90 78 82 78 68A22 22 0 0 1 122 68C122 82 108 90 100 106Z" fill={navy} />
      <circle cx="100" cy="68" r="10" />
    </svg>
  );
}

const files = [
  { name: 'Master Plan 2019 Subzone\nBoundary (No Sea) (KML)', Icon: KmlIcon },
  { name: 'Master Plan 2019 Subzone\nBoundary (No Sea) (GEOJSON)', Icon: BrokenImageIcon, active: true },
];

export default function App() {
  return (
    <Window>
      <GlobalStyle />
      <ToolbarEdge />
      <Viewport>
        <Page>
          <Header>
            <Logo />
            <Brand>Data.gov.sg</Brand>
            <Nav>
              <NavLink>
                Topics
                <Caret />
              </NavLink>
              <NavLink>Blog</NavLink>
              <NavLink>Developers</NavLink>
              <NavLink>Data Request</NavLink>
            </Nav>
          </Header>
          <Hero>
            <HeroRow>
              <Title>Master Plan 2019 Subzone Boundary (No Sea)</Title>
              <Button $fill="#f67731" $width={239}>
                <ButtonIcon $w={31} $h={31} $gap={16} viewBox="0 0 31 31">
                  <path d="M15.5 1V23M6.5 14.5L15.5 23.5L24.5 14.5M1 23V26.5Q1 29.5 4 29.5H27Q30 29.5 30 26.5V23" />
                </ButtonIcon>
                Download
              </Button>
            </HeroRow>
            <SectionLabel>FILES IN THIS DATASET</SectionLabel>
          </Hero>
          <Body>
            <FileList>
              {files.map(({ name, Icon, active }) => (
                <FileItem key={name} $active={active}>
                  <FileName>{name}</FileName>
                  <Icon />
                </FileItem>
              ))}
            </FileList>
            <Viewer>
              <ViewerBar>
                <ViewsLabel>Views:</ViewsLabel>
                <ViewToggle aria-label="Map">
                  <MapIcon />
                </ViewToggle>
                <Button $fill={navy} $width={296}>
                  <ButtonIcon $w={55} $h={31} $gap={9} viewBox="0 0 55 31">
                    <path d="M18 1L1 15.5L18 30M37 1L54 15.5L37 30" />
                  </ButtonIcon>
                  Embed Chart
                </Button>
              </ViewerBar>
              <Map />
            </Viewer>
          </Body>
        </Page>
        <ScrollTrack>
          <ScrollArrow viewBox="0 0 16 8">
            <path d="M8 0L16 8H0Z" fill="#a3a3a3" />
          </ScrollArrow>
          <ScrollThumb />
          <ScrollArrow viewBox="0 0 16 8">
            <path d="M0 0H16L8 8Z" fill="#505050" />
          </ScrollArrow>
        </ScrollTrack>
      </Viewport>
    </Window>
  );
}
